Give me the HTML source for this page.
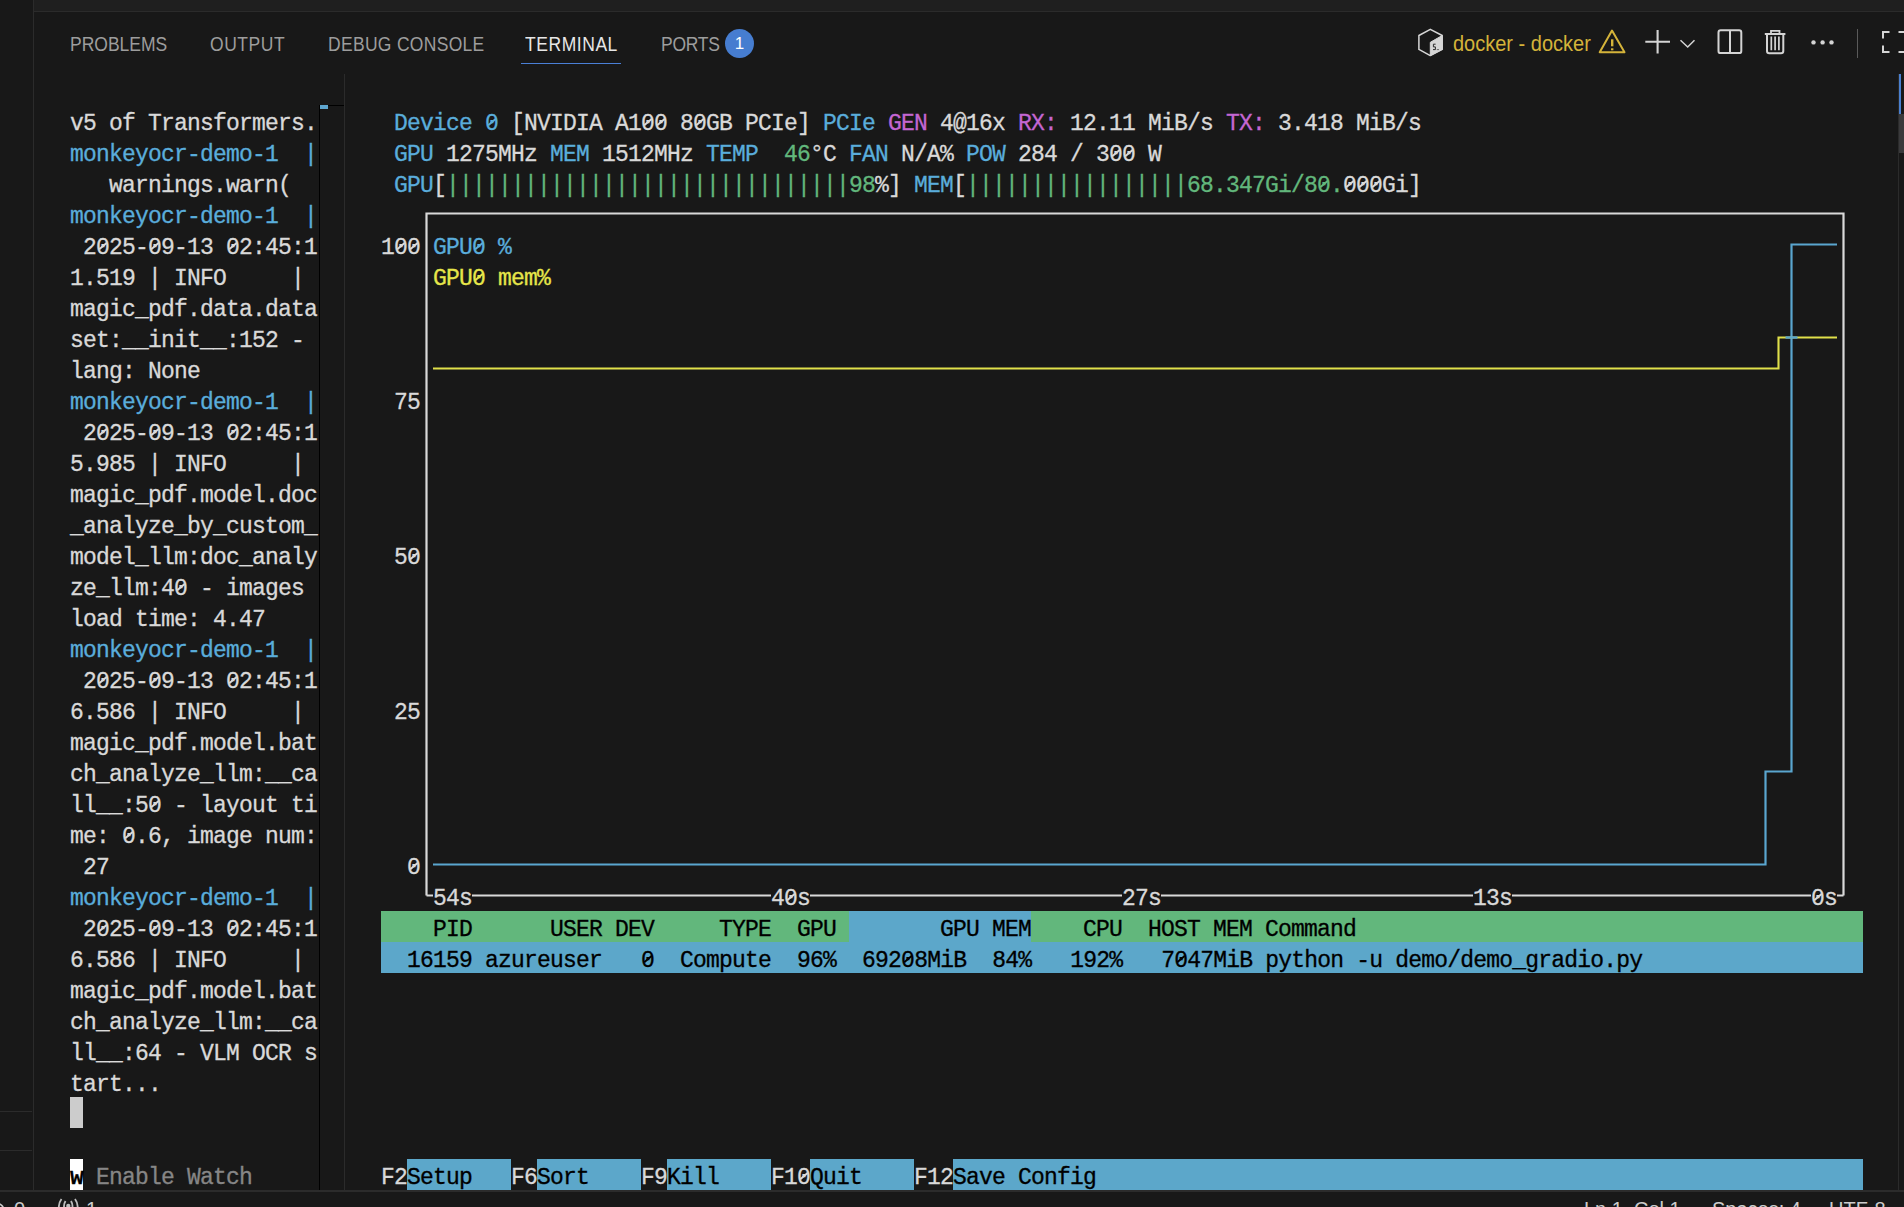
<!DOCTYPE html>
<html><head><meta charset="utf-8"><style>
html,body{margin:0;padding:0;}
body{width:1904px;height:1207px;overflow:hidden;position:relative;background:#181818;}
.abs{position:absolute;}
.t{position:absolute;height:31px;line-height:31px;font-family:"Liberation Mono",monospace;font-size:23px;letter-spacing:-0.800px;white-space:pre;overflow:visible;-webkit-text-stroke:0.3px currentColor;}
.t{padding-top:0;}
.t{text-indent:0}
.sb{position:absolute;top:1197px;font-family:'Liberation Sans',sans-serif;font-size:20px;line-height:24px;color:#cccccc;white-space:pre;}
.z{position:relative;}
.z::after{content:'';position:absolute;left:1.5px;top:10px;width:10px;height:1.8px;background:currentColor;transform:rotate(-40deg);}
.tab{position:absolute;top:32px;font-family:"Liberation Sans",sans-serif;font-size:17.5px;color:#9d9d9d;white-space:pre;line-height:22px;transform:scaleY(1.13);transform-origin:0 4px;}
</style></head><body>
<div class="abs" style="left:34px;top:0;width:1870px;height:11px;background:#1f1f1f;"></div>
<div class="abs" style="left:34px;top:11px;width:1870px;height:1px;background:#2b2b2b;"></div>
<div class="abs" style="left:33px;top:0;width:1px;height:1190px;background:#2b2b2b;"></div>
<div class="abs" style="left:0;top:1111px;width:32px;height:1px;background:#2b2b2b;"></div>
<div class="abs" style="left:0;top:1150px;width:32px;height:1px;background:#2b2b2b;"></div>

<div class="tab" style="left:70px">PROBLEMS</div>
<div class="tab" style="left:210px;letter-spacing:0.55px">OUTPUT</div>
<div class="tab" style="left:328px;letter-spacing:0.3px">DEBUG CONSOLE</div>
<div class="tab" style="left:525px;color:#e7e7e7;letter-spacing:0.55px">TERMINAL</div>
<div class="abs" style="left:521px;top:63px;width:100px;height:1px;background:#4a7fd6;"></div>
<div class="tab" style="left:661px;letter-spacing:-0.25px">PORTS</div>
<div class="abs" style="left:725px;top:29px;width:29px;height:29px;border-radius:50%;background:#467dd0;color:#fff;font:17px 'Liberation Sans',sans-serif;text-align:center;line-height:29px;">1</div>
<div class="abs" style="left:1453px;top:31px;font-family:'Liberation Sans',sans-serif;font-size:20px;color:#d4b33a;white-space:pre;line-height:24px;transform:scaleY(1.08);transform-origin:0 4px;">docker - docker</div>

<svg class="abs" style="left:0;top:0" width="1904" height="70" viewBox="0 0 1904 70">
 <path d="M1430.3 29.3 L1442.2 35.5 V49.4 L1430.3 55.6 L1418.9 49.4 V35.5 Z" fill="none" stroke="#d6d6d6" stroke-width="1.5" stroke-linejoin="round"/>
 <path d="M1442.2 35.5 V49.4 L1430.3 55.6 V42.3 Z" fill="#d6d6d6" stroke="#d6d6d6" stroke-width="1" stroke-linejoin="round"/>
 <path d="M1435.6 44.2 H1433.4 V46.9 H1435.4 V49.6 H1433" fill="none" stroke="#2a2a2a" stroke-width="1"/>
 <path d="M1436.8 49.6 H1439" stroke="#6a6a6a" stroke-width="1"/>
 <path d="M1612 30.5 L1624.5 52.3 H1599.7 Z" fill="none" stroke="#d4b33a" stroke-width="2" stroke-linejoin="round"/>
 <rect x="1611" y="39.3" width="2.4" height="7" fill="#d4b33a"/><rect x="1611" y="48.3" width="2.4" height="2" fill="#d4b33a"/>
 <path d="M1657.6 30 V53.5 M1645.3 41.7 H1670" stroke="#d4d4d4" stroke-width="2.1"/>
 <path d="M1680.5 40.3 L1687.7 47 L1694.5 40.3" fill="none" stroke="#d4d4d4" stroke-width="1.5"/>
 <rect x="1718.5" y="30.3" width="22.8" height="22.8" rx="2.2" fill="none" stroke="#d4d4d4" stroke-width="2"/>
 <path d="M1730 30.3 V53.1" stroke="#d4d4d4" stroke-width="2"/>
 <path d="M1764.8 34 H1785.4" stroke="#d4d4d4" stroke-width="2"/>
 <path d="M1771 33.5 V30.8 H1779.5 V33.5" fill="none" stroke="#d4d4d4" stroke-width="1.8"/>
 <path d="M1767 34 V51 Q1767 53.3 1769.3 53.3 H1781 Q1783.3 53.3 1783.3 51 V34" fill="none" stroke="#d4d4d4" stroke-width="2"/>
 <path d="M1771.3 36.5 V50.3 M1775.1 36.5 V50.3 M1778.9 36.5 V50.3" stroke="#d4d4d4" stroke-width="1.7"/>
 <circle cx="1813.5" cy="42.4" r="2.2" fill="#d4d4d4"/><circle cx="1822.6" cy="42.4" r="2.2" fill="#d4d4d4"/><circle cx="1831.5" cy="42.4" r="2.2" fill="#d4d4d4"/>
 <rect x="1857" y="29" width="1" height="29" fill="#5a5a5a"/>
 <path d="M1883 38.5 V32 H1889.5 M1898.5 32 H1905 M1883 45.5 V52 H1889.5 M1898.5 52 H1905" fill="none" stroke="#d4d4d4" stroke-width="2"/>
</svg>


<!-- split borders -->
<div class="abs" style="left:344px;top:74px;width:1px;height:1116px;background:#2b2b2b;"></div>
<div class="abs" style="left:319px;top:105px;width:1px;height:1085px;background:#000;"></div>
<div class="abs" style="left:320px;top:105px;width:24px;height:1px;background:#000;"></div>
<div class="abs" style="left:320px;top:105px;width:8px;height:4px;background:#5ea6cf;"></div>
<div class="abs" style="left:1898px;top:74px;width:1px;height:1116px;background:#2b2b2b;"></div>
<div class="abs" style="left:1899px;top:74px;width:2px;height:40px;background:#4a80d0;"></div>
<div class="abs" style="left:1899px;top:114px;width:5px;height:39px;background:#3a3a3c;"></div>

<svg class="abs" width="1904" height="1207" style="left:0;top:0">
<path d="M426.5 895.5 V213.5 H1843.5 V895.5" fill="none" stroke="#d9d9d9" stroke-width="2.2"/>
<path d="M426.5 895.5 H1843.5" fill="none" stroke="#d9d9d9" stroke-width="2.2"/>
<path d="M433 864.5 H1765.5 V771.5 H1791.5 V244.5 H1837" fill="none" stroke="#5aa6cf" stroke-width="2.2"/>
<path d="M433 368.5 H1778.5 V337.5 H1837" fill="none" stroke="#e0e04a" stroke-width="2.1"/>
<path d="M1785.5 337.5 H1797.5" fill="none" stroke="#5aa6cf" stroke-width="2.4"/>
</svg>
<div class="t" style="left:70px;top:105px;width:247px;color:#d9d9d9;"><span style="position:relative;top:4px">v5 of Transformers.</span></div><div class="t" style="left:70px;top:136px;width:247px;color:#5aaddb;"><span style="position:relative;top:4px">monkeyocr-demo-1  |</span></div><div class="t" style="left:70px;top:167px;width:221px;color:#d9d9d9;"><span style="position:relative;top:4px">   warnings.warn(</span></div><div class="t" style="left:70px;top:198px;width:247px;color:#5aaddb;"><span style="position:relative;top:4px">monkeyocr-demo-1  |</span></div><div class="t" style="left:70px;top:229px;width:247px;color:#d9d9d9;"><span style="position:relative;top:4px"> 2<span class="z">0</span>25-<span class="z">0</span>9-13 <span class="z">0</span>2:45:1</span></div><div class="t" style="left:70px;top:260px;width:234px;color:#d9d9d9;"><span style="position:relative;top:4px">1.519 | INFO     |</span></div><div class="t" style="left:70px;top:291px;width:247px;color:#d9d9d9;"><span style="position:relative;top:4px">magic_pdf.data.data</span></div><div class="t" style="left:70px;top:322px;width:234px;color:#d9d9d9;"><span style="position:relative;top:4px">set:__init__:152 -</span></div><div class="t" style="left:70px;top:353px;width:130px;color:#d9d9d9;"><span style="position:relative;top:4px">lang: None</span></div><div class="t" style="left:70px;top:384px;width:247px;color:#5aaddb;"><span style="position:relative;top:4px">monkeyocr-demo-1  |</span></div><div class="t" style="left:70px;top:415px;width:247px;color:#d9d9d9;"><span style="position:relative;top:4px"> 2<span class="z">0</span>25-<span class="z">0</span>9-13 <span class="z">0</span>2:45:1</span></div><div class="t" style="left:70px;top:446px;width:234px;color:#d9d9d9;"><span style="position:relative;top:4px">5.985 | INFO     |</span></div><div class="t" style="left:70px;top:477px;width:247px;color:#d9d9d9;"><span style="position:relative;top:4px">magic_pdf.model.doc</span></div><div class="t" style="left:70px;top:508px;width:247px;color:#d9d9d9;"><span style="position:relative;top:4px">_analyze_by_custom_</span></div><div class="t" style="left:70px;top:539px;width:247px;color:#d9d9d9;"><span style="position:relative;top:4px">model_llm:doc_analy</span></div><div class="t" style="left:70px;top:570px;width:234px;color:#d9d9d9;"><span style="position:relative;top:4px">ze_llm:4<span class="z">0</span> - images</span></div><div class="t" style="left:70px;top:601px;width:195px;color:#d9d9d9;"><span style="position:relative;top:4px">load time: 4.47</span></div><div class="t" style="left:70px;top:632px;width:247px;color:#5aaddb;"><span style="position:relative;top:4px">monkeyocr-demo-1  |</span></div><div class="t" style="left:70px;top:663px;width:247px;color:#d9d9d9;"><span style="position:relative;top:4px"> 2<span class="z">0</span>25-<span class="z">0</span>9-13 <span class="z">0</span>2:45:1</span></div><div class="t" style="left:70px;top:694px;width:234px;color:#d9d9d9;"><span style="position:relative;top:4px">6.586 | INFO     |</span></div><div class="t" style="left:70px;top:725px;width:247px;color:#d9d9d9;"><span style="position:relative;top:4px">magic_pdf.model.bat</span></div><div class="t" style="left:70px;top:756px;width:247px;color:#d9d9d9;"><span style="position:relative;top:4px">ch_analyze_llm:__ca</span></div><div class="t" style="left:70px;top:787px;width:247px;color:#d9d9d9;"><span style="position:relative;top:4px">ll__:5<span class="z">0</span> - layout ti</span></div><div class="t" style="left:70px;top:818px;width:247px;color:#d9d9d9;"><span style="position:relative;top:4px">me: <span class="z">0</span>.6, image num:</span></div><div class="t" style="left:70px;top:849px;width:39px;color:#d9d9d9;"><span style="position:relative;top:4px"> 27</span></div><div class="t" style="left:70px;top:880px;width:247px;color:#5aaddb;"><span style="position:relative;top:4px">monkeyocr-demo-1  |</span></div><div class="t" style="left:70px;top:911px;width:247px;color:#d9d9d9;"><span style="position:relative;top:4px"> 2<span class="z">0</span>25-<span class="z">0</span>9-13 <span class="z">0</span>2:45:1</span></div><div class="t" style="left:70px;top:942px;width:234px;color:#d9d9d9;"><span style="position:relative;top:4px">6.586 | INFO     |</span></div><div class="t" style="left:70px;top:973px;width:247px;color:#d9d9d9;"><span style="position:relative;top:4px">magic_pdf.model.bat</span></div><div class="t" style="left:70px;top:1004px;width:247px;color:#d9d9d9;"><span style="position:relative;top:4px">ch_analyze_llm:__ca</span></div><div class="t" style="left:70px;top:1035px;width:247px;color:#d9d9d9;"><span style="position:relative;top:4px">ll__:64 - VLM OCR s</span></div><div class="t" style="left:70px;top:1066px;width:91px;color:#d9d9d9;"><span style="position:relative;top:4px">tart...</span></div><div style="position:absolute;left:70px;top:1097px;width:13px;height:31px;background:#cccccc"></div><div class="t" style="left:70px;top:1159px;width:13px;color:#000;font-weight:bold;background:#ffffff;"><span style="position:relative;top:4px">w</span></div><div class="t" style="left:83px;top:1159px;width:169px;color:#868686;"><span style="position:relative;top:4px"> Enable Watch</span></div><div class="t" style="left:381px;top:105px;width:13px;color:#d9d9d9;"><span style="position:relative;top:4px"> </span></div><div class="t" style="left:394px;top:105px;width:104px;color:#5aaddb;"><span style="position:relative;top:4px">Device <span class="z">0</span></span></div><div class="t" style="left:498px;top:105px;width:325px;color:#d9d9d9;"><span style="position:relative;top:4px"> [NVIDIA A1<span class="z">0</span><span class="z">0</span> 8<span class="z">0</span>GB PCIe] </span></div><div class="t" style="left:823px;top:105px;width:52px;color:#5aaddb;"><span style="position:relative;top:4px">PCIe</span></div><div class="t" style="left:875px;top:105px;width:13px;color:#d9d9d9;"><span style="position:relative;top:4px"> </span></div><div class="t" style="left:888px;top:105px;width:39px;color:#c466d2;"><span style="position:relative;top:4px">GEN</span></div><div class="t" style="left:927px;top:105px;width:91px;color:#d9d9d9;"><span style="position:relative;top:4px"> 4@16x </span></div><div class="t" style="left:1018px;top:105px;width:39px;color:#c466d2;"><span style="position:relative;top:4px">RX:</span></div><div class="t" style="left:1057px;top:105px;width:169px;color:#d9d9d9;"><span style="position:relative;top:4px"> 12.11 MiB/s </span></div><div class="t" style="left:1226px;top:105px;width:39px;color:#c466d2;"><span style="position:relative;top:4px">TX:</span></div><div class="t" style="left:1265px;top:105px;width:156px;color:#d9d9d9;"><span style="position:relative;top:4px"> 3.418 MiB/s</span></div><div class="t" style="left:381px;top:136px;width:13px;color:#d9d9d9;"><span style="position:relative;top:4px"> </span></div><div class="t" style="left:394px;top:136px;width:39px;color:#5aaddb;"><span style="position:relative;top:4px">GPU</span></div><div class="t" style="left:433px;top:136px;width:117px;color:#d9d9d9;"><span style="position:relative;top:4px"> 1275MHz </span></div><div class="t" style="left:550px;top:136px;width:39px;color:#5aaddb;"><span style="position:relative;top:4px">MEM</span></div><div class="t" style="left:589px;top:136px;width:117px;color:#d9d9d9;"><span style="position:relative;top:4px"> 1512MHz </span></div><div class="t" style="left:706px;top:136px;width:52px;color:#5aaddb;"><span style="position:relative;top:4px">TEMP</span></div><div class="t" style="left:758px;top:136px;width:26px;color:#d9d9d9;"><span style="position:relative;top:4px">  </span></div><div class="t" style="left:784px;top:136px;width:26px;color:#62b77c;"><span style="position:relative;top:4px">46</span></div><div class="t" style="left:810px;top:136px;width:39px;color:#d9d9d9;"><span style="position:relative;top:4px">°C </span></div><div class="t" style="left:849px;top:136px;width:39px;color:#5aaddb;"><span style="position:relative;top:4px">FAN</span></div><div class="t" style="left:888px;top:136px;width:78px;color:#d9d9d9;"><span style="position:relative;top:4px"> N/A% </span></div><div class="t" style="left:966px;top:136px;width:39px;color:#5aaddb;"><span style="position:relative;top:4px">POW</span></div><div class="t" style="left:1005px;top:136px;width:156px;color:#d9d9d9;"><span style="position:relative;top:4px"> 284 / 3<span class="z">0</span><span class="z">0</span> W</span></div><div class="t" style="left:381px;top:167px;width:13px;color:#d9d9d9;"><span style="position:relative;top:4px"> </span></div><div class="t" style="left:394px;top:167px;width:39px;color:#5aaddb;"><span style="position:relative;top:4px">GPU</span></div><div class="t" style="left:433px;top:167px;width:13px;color:#d9d9d9;"><span style="position:relative;top:4px">[</span></div><div class="t" style="left:446px;top:167px;width:403px;color:#62b77c;"><span style="position:relative;top:4px">|||||||||||||||||||||||||||||||</span></div><div class="t" style="left:849px;top:167px;width:26px;color:#62b77c;"><span style="position:relative;top:4px">98</span></div><div class="t" style="left:875px;top:167px;width:39px;color:#d9d9d9;"><span style="position:relative;top:4px">%] </span></div><div class="t" style="left:914px;top:167px;width:39px;color:#5aaddb;"><span style="position:relative;top:4px">MEM</span></div><div class="t" style="left:953px;top:167px;width:13px;color:#d9d9d9;"><span style="position:relative;top:4px">[</span></div><div class="t" style="left:966px;top:167px;width:221px;color:#62b77c;"><span style="position:relative;top:4px">|||||||||||||||||</span></div><div class="t" style="left:1187px;top:167px;width:156px;color:#62b77c;"><span style="position:relative;top:4px">68.347Gi/8<span class="z">0</span>.</span></div><div class="t" style="left:1343px;top:167px;width:78px;color:#d9d9d9;"><span style="position:relative;top:4px"><span class="z">0</span><span class="z">0</span><span class="z">0</span>Gi]</span></div><div class="t" style="left:381px;top:229px;width:39px;color:#d9d9d9;"><span style="position:relative;top:4px">1<span class="z">0</span><span class="z">0</span></span></div><div class="t" style="left:420px;top:229px;width:13px;color:#d9d9d9;"><span style="position:relative;top:4px"> </span></div><div class="t" style="left:433px;top:229px;width:78px;color:#5aaddb;"><span style="position:relative;top:4px">GPU<span class="z">0</span> %</span></div><div class="t" style="left:381px;top:260px;width:39px;color:#d9d9d9;"><span style="position:relative;top:4px">   </span></div><div class="t" style="left:420px;top:260px;width:13px;color:#d9d9d9;"><span style="position:relative;top:4px"> </span></div><div class="t" style="left:433px;top:260px;width:117px;color:#e6e64a;"><span style="position:relative;top:4px">GPU<span class="z">0</span> mem%</span></div><div class="t" style="left:381px;top:384px;width:39px;color:#d9d9d9;"><span style="position:relative;top:4px"> 75</span></div><div class="t" style="left:381px;top:539px;width:39px;color:#d9d9d9;"><span style="position:relative;top:4px"> 5<span class="z">0</span></span></div><div class="t" style="left:381px;top:694px;width:39px;color:#d9d9d9;"><span style="position:relative;top:4px"> 25</span></div><div class="t" style="left:381px;top:849px;width:39px;color:#d9d9d9;"><span style="position:relative;top:4px">  <span class="z">0</span></span></div><div class="t" style="left:433px;top:880px;width:39px;color:#d9d9d9;background:#181818;"><span style="position:relative;top:4px">54s</span></div><div class="t" style="left:771px;top:880px;width:39px;color:#d9d9d9;background:#181818;"><span style="position:relative;top:4px">4<span class="z">0</span>s</span></div><div class="t" style="left:1122px;top:880px;width:39px;color:#d9d9d9;background:#181818;"><span style="position:relative;top:4px">27s</span></div><div class="t" style="left:1473px;top:880px;width:39px;color:#d9d9d9;background:#181818;"><span style="position:relative;top:4px">13s</span></div><div class="t" style="left:1811px;top:880px;width:26px;color:#d9d9d9;background:#181818;"><span style="position:relative;top:4px"><span class="z">0</span>s</span></div><div class="t" style="left:381px;top:911px;width:468px;color:#000000;background:#62b77c;"><span style="position:relative;top:4px">    PID      USER DEV     TYPE  GPU </span></div><div class="t" style="left:849px;top:911px;width:182px;color:#000000;background:#5ca7ca;"><span style="position:relative;top:4px">       GPU MEM</span></div><div class="t" style="left:1031px;top:911px;width:832px;color:#000000;background:#62b77c;"><span style="position:relative;top:4px">    CPU  HOST MEM Command                                       </span></div><div class="t" style="left:381px;top:942px;width:1482px;color:#000000;background:#5ca7ca;"><span style="position:relative;top:4px">  16159 azureuser   <span class="z">0</span>  Compute  96%  692<span class="z">0</span>8MiB  84%   192%   7<span class="z">0</span>47MiB python -u demo/demo_gradio.py                 </span></div><div class="t" style="left:381px;top:1159px;width:26px;color:#d9d9d9;"><span style="position:relative;top:4px">F2</span></div><div class="t" style="left:407px;top:1159px;width:104px;color:#000000;background:#5ca7ca;"><span style="position:relative;top:4px">Setup   </span></div><div class="t" style="left:511px;top:1159px;width:26px;color:#d9d9d9;"><span style="position:relative;top:4px">F6</span></div><div class="t" style="left:537px;top:1159px;width:104px;color:#000000;background:#5ca7ca;"><span style="position:relative;top:4px">Sort    </span></div><div class="t" style="left:641px;top:1159px;width:26px;color:#d9d9d9;"><span style="position:relative;top:4px">F9</span></div><div class="t" style="left:667px;top:1159px;width:104px;color:#000000;background:#5ca7ca;"><span style="position:relative;top:4px">Kill    </span></div><div class="t" style="left:771px;top:1159px;width:39px;color:#d9d9d9;"><span style="position:relative;top:4px">F1<span class="z">0</span></span></div><div class="t" style="left:810px;top:1159px;width:104px;color:#000000;background:#5ca7ca;"><span style="position:relative;top:4px">Quit    </span></div><div class="t" style="left:914px;top:1159px;width:39px;color:#d9d9d9;"><span style="position:relative;top:4px">F12</span></div><div class="t" style="left:953px;top:1159px;width:910px;color:#000000;background:#5ca7ca;"><span style="position:relative;top:4px">Save Config                                                           </span></div>

<!-- status bar -->
<div class="abs" style="left:0;top:1190px;width:1904px;height:2px;background:#2b2b2b;"></div>
<svg class="abs" style="left:0;top:1192px" width="10" height="15"><circle cx="-4" cy="19" r="8" fill="none" stroke="#cccccc" stroke-width="1.6"/></svg>
<div class="sb" style="left:14px">0</div>
<svg class="abs" style="left:0;top:1192px" width="120" height="15" viewBox="0 0 120 15">
 <path d="M61.5 7 Q56.5 14 61 21 M65.5 9 Q62.5 14 65.5 19 M75 7 Q80 14 75.5 21 M71 9 Q74 14 71 19" fill="none" stroke="#bdbdbd" stroke-width="1.8"/>
 <circle cx="68.3" cy="13.8" r="2.1" fill="#bdbdbd"/>
</svg>
<div class="sb" style="left:86px">1</div>
<div class="sb" style="left:1584px">Ln 1, Col 1</div>
<div class="sb" style="left:1712px">Spaces: 4</div>
<div class="sb" style="left:1829px">UTF-8</div>
</body></html>
